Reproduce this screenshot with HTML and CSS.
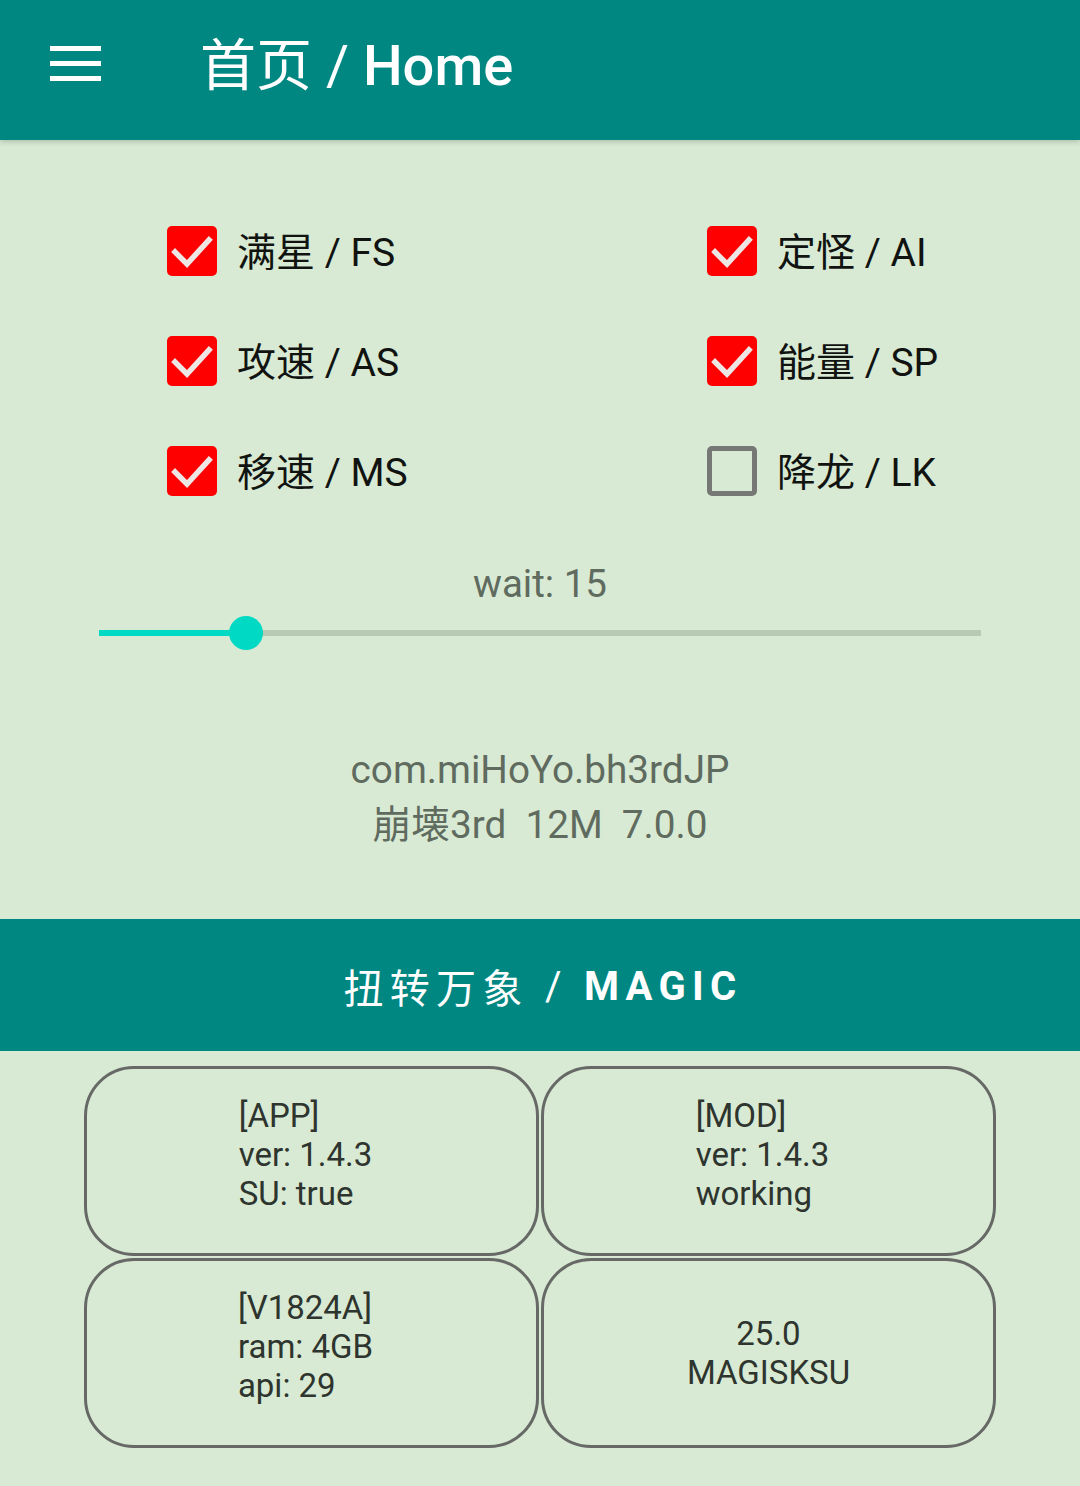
FILE: index.html
```html
<!DOCTYPE html>
<html lang="zh-CN">
<head>
<meta charset="utf-8">
<title>首页 / Home</title>
<link rel="stylesheet" href="styles.css">
</head>
<body>
<header class="appbar">
  <div class="menu-icon" aria-label="menu">
    <span class="bar"></span><span class="bar"></span><span class="bar"></span>
  </div>
  <h1 class="title"><span class="cjk">首页</span> / <span class="title-en">Home</span></h1>
</header>

<main class="content">
  <section class="options">
    <label class="option"><span class="box checked"><svg viewBox="0 0 50 50"><path d="M8 26 L20 38 L42 14"/></svg></span><span class="label">满星 / FS</span></label>
    <label class="option"><span class="box checked"><svg viewBox="0 0 50 50"><path d="M8 26 L20 38 L42 14"/></svg></span><span class="label">定怪 / AI</span></label>
    <label class="option"><span class="box checked"><svg viewBox="0 0 50 50"><path d="M8 26 L20 38 L42 14"/></svg></span><span class="label">攻速 / AS</span></label>
    <label class="option"><span class="box checked"><svg viewBox="0 0 50 50"><path d="M8 26 L20 38 L42 14"/></svg></span><span class="label">能量 / SP</span></label>
    <label class="option"><span class="box checked"><svg viewBox="0 0 50 50"><path d="M8 26 L20 38 L42 14"/></svg></span><span class="label">移速 / MS</span></label>
    <label class="option"><span class="box"></span><span class="label">降龙 / LK</span></label>
  </section>

  <section class="wait">
    <div class="wait-label">wait: 15</div>
    <div class="slider">
      <div class="track">
        <div class="track-fill" style="width: 147px"></div>
        <div class="thumb" style="left: 147px"></div>
      </div>
    </div>
  </section>

  <section class="pkg">
    <div class="pkg-line">com.miHoYo.bh3rdJP</div>
    <div class="pkg-line">崩壊3rd  12M  7.0.0</div>
  </section>
</main>

<div class="magic"><span class="magic-cn">扭转万象</span> / <span class="magic-en">MAGIC</span></div>

<section class="cards">
  <div class="card card-left"><div class="card-text">[APP]<br>ver: 1.4.3<br>SU: true</div></div>
  <div class="card card-left"><div class="card-text">[MOD]<br>ver: 1.4.3<br>working</div></div>
  <div class="card card-left"><div class="card-text">[V1824A]<br>ram: 4GB<br>api: 29</div></div>
  <div class="card card-center"><div class="card-text">25.0<br>MAGISKSU</div></div>
</section>
</body>
</html>
```

FILE: styles.css
```css
* { box-sizing: border-box; }

html, body {
  margin: 0;
  padding: 0;
}

body {
  background: #d8ead3;
  font-family: Roboto, "Noto Sans CJK SC", sans-serif;
  width: 1080px;
  min-height: 1486px;
  overflow: hidden;
}

/* ---------- App bar ---------- */
.appbar {
  height: 140px;
  background: #008782;
  display: flex;
  align-items: center;
  padding-bottom: 8px;
  box-shadow: 0 2px 5px rgba(0, 0, 0, 0.18);
  position: relative;
  z-index: 1;
}

.menu-icon {
  margin-left: 50px;
  width: 51px;
  display: flex;
  flex-direction: column;
  gap: 10px;
  margin-top: -6px;
}

.menu-icon .bar {
  display: block;
  height: 5px;
  background: #ffffff;
}

.title {
  margin: 0 0 0 99px;
  color: #ffffff;
  font-size: 56px;
  font-weight: 400;
  line-height: 1;
  white-space: pre;
}

.title .title-en {
  font-weight: 500;
}

/* ---------- Options ---------- */
.options {
  display: grid;
  grid-template-columns: 1fr 1fr;
  grid-auto-rows: 110px;
  padding-top: 56px;
}

.option {
  display: flex;
  align-items: center;
  gap: 20px;
  padding-left: 167px;
}

.box {
  width: 50px;
  height: 50px;
  border-radius: 5px;
  border: 5px solid #767876;
  flex: none;
  display: flex;
}

.box.checked {
  background: #ff0000;
  border: none;
}

.box svg {
  width: 50px;
  height: 50px;
}

.box svg path {
  fill: none;
  stroke: #ece6e4;
  stroke-width: 5.5;
  stroke-linecap: square;
  stroke-linejoin: miter;
}

.label {
  font-size: 39px;
  color: #111311;
  line-height: 1;
  white-space: pre;
  padding-top: 4px;
}

/* ---------- Wait slider ---------- */
.wait {
  margin-top: 33px;
}

.wait-label {
  text-align: center;
  font-size: 38.5px;
  line-height: 50px;
  color: #5f6b5f;
}

.slider {
  margin: 7px 99px 0;
  height: 34px;
  display: flex;
  align-items: center;
}

.track {
  position: relative;
  height: 6px;
  width: 100%;
  background: #b9cab4;
}

.track-fill {
  height: 100%;
  background: #00d9c4;
}

.thumb {
  position: absolute;
  top: 50%;
  width: 34px;
  height: 34px;
  margin: -17px 0 0 -17px;
  border-radius: 50%;
  background: #00d9c4;
}

/* ---------- Package info ---------- */
.pkg {
  margin-top: 92px;
  text-align: center;
  color: #5f6b5f;
  font-size: 38.7px;
  line-height: 55px;
}

.pkg-line {
  white-space: pre;
}

/* ---------- Magic bar ---------- */
.magic {
  margin-top: 67px;
  height: 132px;
  background: #008782;
  color: #ffffff;
  display: flex;
  align-items: center;
  justify-content: center;
  font-size: 40px;
  letter-spacing: 6.3px;
  white-space: pre;
  padding-left: 6px;
  padding-top: 2px;
}

.magic-en {
  font-weight: 700;
}

/* ---------- Cards ---------- */
.cards {
  display: grid;
  grid-template-columns: 455px 455px;
  grid-auto-rows: 190px;
  gap: 2px;
  padding: 15px 84px 0;
}

.card {
  border: 3px solid #666966;
  border-radius: 50px;
  display: flex;
  align-items: center;
  justify-content: center;
}

.card-text {
  font-size: 33px;
  line-height: 39px;
  color: #2e342e;
}

.card-left .card-text {
  text-align: left;
  padding-right: 12px;
  margin-bottom: 14px;
}

.card-center .card-text {
  text-align: center;
}
```
